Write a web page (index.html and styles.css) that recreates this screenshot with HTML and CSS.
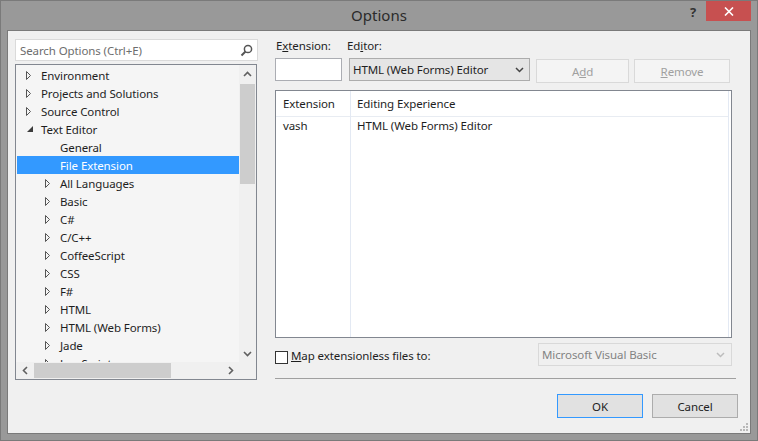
FILE: index.html
```html
<!DOCTYPE html>
<html>
<head>
<meta charset="utf-8">
<link rel="stylesheet" href="styles.css">
</head>
<body>
<div class="window">
  <div class="titlebar">
    <div></div>
    <div class="title">Options</div>
    <div class="caption-btns">
      <span class="help">?</span>
      <div class="close"><svg width="10" height="9" viewBox="0 0 10 9"><path d="M1 0.5 L9 8.5 M9 0.5 L1 8.5" stroke="#fff" stroke-width="1.6"/></svg></div>
    </div>
  </div>
  <div class="client">
    <div class="left">
      <div class="search">
        <span class="ph">Search Options (Ctrl+E)</span>
        <svg width="13" height="13" viewBox="0 0 13 13"><circle cx="8" cy="5" r="3.6" fill="none" stroke="#555" stroke-width="1.5"/><path d="M5.5 7.5 L1.5 11.5" stroke="#555" stroke-width="2"/></svg>
      </div>
      <div class="tree">
        <div class="tree-items">
          <div class="row"><svg class="exp" viewBox="0 0 24 18"><path d="M9.5 5.5 V13.5 L13.5 9.5 Z" fill="none" stroke="#555"/></svg><span>Environment</span></div>
          <div class="row"><svg class="exp" viewBox="0 0 24 18"><path d="M9.5 5.5 V13.5 L13.5 9.5 Z" fill="none" stroke="#555"/></svg><span>Projects and Solutions</span></div>
          <div class="row"><svg class="exp" viewBox="0 0 24 18"><path d="M9.5 5.5 V13.5 L13.5 9.5 Z" fill="none" stroke="#555"/></svg><span>Source Control</span></div>
          <div class="row"><svg class="exp" viewBox="0 0 24 18"><path d="M16 6 V12 H10 Z" fill="#3c3c3c"/></svg><span>Text Editor</span></div>
          <div class="row l1"><span class="exp"></span><span>General</span></div>
          <div class="row l1 sel"><span class="exp"></span><span>File Extension</span></div>
          <div class="row l1"><svg class="exp" viewBox="0 0 24 18"><path d="M9.5 5.5 V13.5 L13.5 9.5 Z" fill="none" stroke="#555"/></svg><span>All Languages</span></div>
          <div class="row l1"><svg class="exp" viewBox="0 0 24 18"><path d="M9.5 5.5 V13.5 L13.5 9.5 Z" fill="none" stroke="#555"/></svg><span>Basic</span></div>
          <div class="row l1"><svg class="exp" viewBox="0 0 24 18"><path d="M9.5 5.5 V13.5 L13.5 9.5 Z" fill="none" stroke="#555"/></svg><span>C#</span></div>
          <div class="row l1"><svg class="exp" viewBox="0 0 24 18"><path d="M9.5 5.5 V13.5 L13.5 9.5 Z" fill="none" stroke="#555"/></svg><span>C/C++</span></div>
          <div class="row l1"><svg class="exp" viewBox="0 0 24 18"><path d="M9.5 5.5 V13.5 L13.5 9.5 Z" fill="none" stroke="#555"/></svg><span>CoffeeScript</span></div>
          <div class="row l1"><svg class="exp" viewBox="0 0 24 18"><path d="M9.5 5.5 V13.5 L13.5 9.5 Z" fill="none" stroke="#555"/></svg><span>CSS</span></div>
          <div class="row l1"><svg class="exp" viewBox="0 0 24 18"><path d="M9.5 5.5 V13.5 L13.5 9.5 Z" fill="none" stroke="#555"/></svg><span>F#</span></div>
          <div class="row l1"><svg class="exp" viewBox="0 0 24 18"><path d="M9.5 5.5 V13.5 L13.5 9.5 Z" fill="none" stroke="#555"/></svg><span>HTML</span></div>
          <div class="row l1"><svg class="exp" viewBox="0 0 24 18"><path d="M9.5 5.5 V13.5 L13.5 9.5 Z" fill="none" stroke="#555"/></svg><span>HTML (Web Forms)</span></div>
          <div class="row l1"><svg class="exp" viewBox="0 0 24 18"><path d="M9.5 5.5 V13.5 L13.5 9.5 Z" fill="none" stroke="#555"/></svg><span>Jade</span></div>
          <div class="row l1"><svg class="exp" viewBox="0 0 24 18"><path d="M9.5 5.5 V13.5 L13.5 9.5 Z" fill="none" stroke="#555"/></svg><span>JavaScript</span></div>
        </div>
        <div class="vscroll">
          <div class="sarrow"><svg width="9" height="6" viewBox="0 0 9 6"><path d="M1 5 L4.5 1.5 L8 5" fill="none" stroke="#606060" stroke-width="1.6"/></svg></div>
          <div class="vtrack"><div class="vthumb"></div></div>
          <div class="sarrow"><svg width="9" height="6" viewBox="0 0 9 6"><path d="M1 1 L4.5 4.5 L8 1" fill="none" stroke="#606060" stroke-width="1.6"/></svg></div>
        </div>
        <div class="hscroll">
          <div class="sarrow"><svg width="6" height="9" viewBox="0 0 6 9"><path d="M5 1 L1.5 4.5 L5 8" fill="none" stroke="#606060" stroke-width="1.6"/></svg></div>
          <div class="htrack"><div class="hthumb"></div></div>
          <div class="sarrow"><svg width="6" height="9" viewBox="0 0 6 9"><path d="M1 1 L4.5 4.5 L1 8" fill="none" stroke="#606060" stroke-width="1.6"/></svg></div>
        </div>
        <div class="corner"></div>
      </div>
    </div>
    <div class="right">
      <div class="labels">
        <span class="lbl-ext">E<u>x</u>tension:</span>
        <span>Ed<u>i</u>tor:</span>
      </div>
      <div class="inputs">
        <div class="ext"></div>
        <div class="combo"><span>HTML (Web Forms) Editor</span><svg width="9" height="6" viewBox="0 0 9 6"><path d="M1 1 L4.5 4.5 L8 1" fill="none" stroke="#444" stroke-width="1.5"/></svg></div>
        <div class="btn dis add">A<u>d</u>d</div>
        <div class="btn dis remove"><u>R</u>emove</div>
      </div>
      <div class="list">
        <div class="col col1">
          <div class="hcell">Extension</div>
          <div class="cell">vash</div>
        </div>
        <div class="col col2">
          <div class="hcell">Editing Experience</div>
          <div class="cell">HTML (Web Forms) Editor</div>
        </div>
      </div>
      <div class="checkrow">
        <div class="checkbox"></div>
        <span class="chklabel"><u>M</u>ap extensionless files to:</span>
        <div class="combo-dis"><span>Microsoft Visual Basic</span><svg width="9" height="6" viewBox="0 0 9 6"><path d="M1 1 L4.5 4.5 L8 1" fill="none" stroke="#bdbdbd" stroke-width="1.5"/></svg></div>
      </div>
      <div class="sep"></div>
      <div class="buttons">
        <div class="btn ok">OK</div>
        <div class="btn">Cancel</div>
      </div>
    </div>
    <svg class="grip" width="8" height="8" viewBox="0 0 8 8"><g fill="#b8b8b8"><rect x="6" y="0" width="2" height="2"/><rect x="3" y="3" width="2" height="2"/><rect x="6" y="3" width="2" height="2"/><rect x="0" y="6" width="2" height="2"/><rect x="3" y="6" width="2" height="2"/><rect x="6" y="6" width="2" height="2"/></g></svg>
  </div>
</div>
</body>
</html>
```

FILE: styles.css
```css
* { box-sizing: border-box; }
body {
  margin: 0;
  font-family: "Noto Sans", "Open Sans", sans-serif;
  font-size: 11.5px;
  letter-spacing: -0.1px;
  color: #1e1e1e;
}
.window {
  width: 758px;
  height: 441px;
  background: #999999;
  border: 1px solid #7a7a7a;
  display: flex;
  flex-direction: column;
}
.titlebar {
  height: 29px;
  flex: none;
  display: grid;
  grid-template-columns: 1fr auto 1fr;
  padding: 0 6px;
}
.title {
  font-size: 15px;
  letter-spacing: 0;
  line-height: 28px;
  color: #2b2b2b;
}
.caption-btns {
  justify-self: end;
  display: flex;
  align-items: flex-start;
}
.help {
  font-weight: bold;
  font-size: 13px;
  line-height: 22px;
  color: #333;
  margin-right: 10px;
}
.close {
  width: 45px;
  height: 20px;
  background: #c75050;
  display: flex;
  align-items: center;
  justify-content: center;
}
.client {
  position: relative;
  margin: 0 6px;
  height: 404px;
  border: 1px solid #7a7a7a;
  background: #f0f0f0;
  display: flex;
  padding-left: 7px;
}
.left {
  width: 243px;
  display: flex;
  flex-direction: column;
  flex: none;
}
.search {
  margin-top: 8px;
  height: 22px;
  border: 1px solid #dadada;
  background: #fff;
  display: flex;
  align-items: center;
  justify-content: space-between;
  padding: 0 4px 0 4px;
}
.ph { color: #6d6d6d; }
.tree {
  margin-top: 3px;
  width: 242px;
  height: 316px;
  border: 1px solid #828790;
  background: #f5f5f5;
  display: grid;
  grid-template-columns: 1fr 17px;
  grid-template-rows: 1fr 17px;
}
.tree-items {
  overflow: hidden;
  padding-top: 1px;
}
.row {
  height: 18px;
  display: flex;
  align-items: center;
  margin-left: 1px;
  white-space: nowrap;
}
.row.l1 { padding-left: 19px; }
.row.sel { background: #3399ff; color: #fff; }
.exp {
  width: 24px;
  height: 18px;
  flex: none;
}
.vscroll {
  background: #f0f0f0;
  display: flex;
  flex-direction: column;
}
.sarrow {
  width: 17px;
  height: 17px;
  flex: none;
  display: flex;
  align-items: center;
  justify-content: center;
}
.vtrack { flex: 1; padding-top: 2px; }
.vthumb {
  width: 15px;
  height: 100px;
  margin-left: 1px;
  background: #cdcdcd;
}
.hscroll {
  background: #f0f0f0;
  display: flex;
}
.htrack { flex: 1; padding-top: 1px; padding-left: 1px; }
.hthumb {
  width: 137px;
  height: 15px;
  background: #cdcdcd;
}
.corner { background: #f0f0f0; }
.right {
  margin-left: 17px;
  width: 463px;
  display: flex;
  flex-direction: column;
}
.labels {
  margin-top: 7px;
  height: 16px;
  line-height: 16px;
  display: flex;
}
.lbl-ext { width: 72px; padding-left: 1px; }
.inputs {
  margin-top: 4px;
  height: 23px;
  display: flex;
  align-items: flex-start;
}
.ext {
  width: 67px;
  height: 23px;
  border: 1px solid #abadb3;
  background: #fff;
}
.combo {
  margin-left: 7px;
  width: 181px;
  height: 23px;
  border: 1px solid #acacac;
  background: #e5e5e5;
  display: flex;
  align-items: center;
  justify-content: space-between;
  padding: 0 5px 0 3px;
}
.btn {
  height: 24px;
  border: 1px solid #acacac;
  background: #e1e1e1;
  display: flex;
  align-items: center;
  justify-content: center;
  width: 86px;
}
.btn.dis {
  background: #f4f4f4;
  border-color: #d9d9d9;
  color: #a0a0a0;
  margin-top: 1px;
}
.add { margin-left: 6px; width: 93px; }
.remove { margin-left: 5px; width: 96px; }
.list {
  margin-top: 9px;
  width: 457px;
  height: 248px;
  border: 1px solid #828790;
  background: #fff;
  display: flex;
}
.col { display: flex; flex-direction: column; }
.col1 { width: 75px; border-right: 1px solid #e3e9f3; }
.col2 { flex: 1; border-right: 1px solid #e3e9f3; margin-right: 2px; }
.hcell {
  height: 26px;
  line-height: 25px;
  border-bottom: 1px solid #e8ecf2;
  padding-left: 7px;
  white-space: nowrap;
}
.col2 .hcell, .col2 .cell { padding-left: 6px; }
.cell {
  height: 18px;
  line-height: 18px;
  padding-left: 7px;
  white-space: nowrap;
}
.checkrow {
  margin-top: 5px;
  height: 23px;
  display: flex;
  align-items: flex-start;
}
.checkbox {
  margin-top: 8px;
  width: 13px;
  height: 13px;
  border: 1px solid #333;
  background: #fff;
}
.chklabel {
  margin-top: 5px;
  margin-left: 3px;
  line-height: 16px;
}
.combo-dis {
  margin-left: auto;
  margin-right: 6px;
  width: 194px;
  height: 23px;
  border: 1px solid #d9d9d9;
  background: #f0f0f0;
  color: #838383;
  display: flex;
  align-items: center;
  justify-content: space-between;
  padding: 0 6px 0 3px;
}
.sep {
  margin-top: 12px;
  width: 461px;
  height: 1px;
  background: #a0a0a0;
}
.buttons {
  margin-top: 15px;
  display: flex;
  justify-content: flex-end;
  gap: 9px;
}
.btn.ok { border-color: #3399ff; }
.grip {
  position: absolute;
  right: 2px;
  bottom: 2px;
}
```
